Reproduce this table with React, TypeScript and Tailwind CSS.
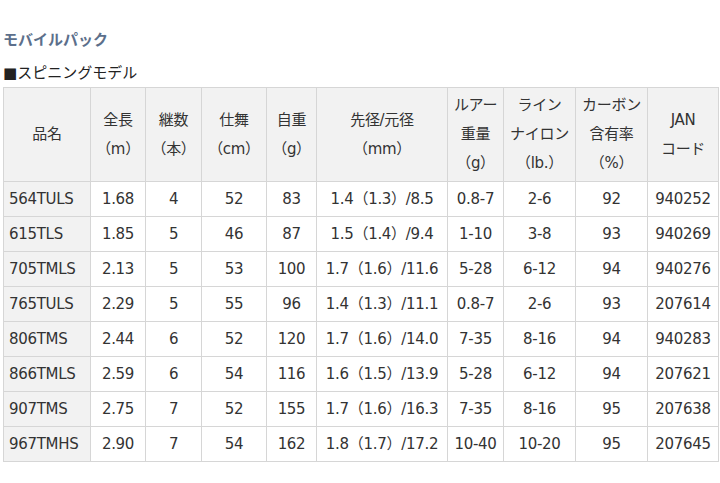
const widths = [87, 55, 56, 65, 50, 131, 56, 72, 72, 71];

const headers: string[][] = [
  ["品名"],
  ["全長", "（m）"],
  ["継数", "（本）"],
  ["仕舞", "（cm）"],
  ["自重", "（g）"],
  ["先径/元径", "（mm）"],
  ["ルアー", "重量", "（g）"],
  ["ライン", "ナイロン", "（lb.）"],
  ["カーボン", "含有率", "（%）"],
  ["JAN", "コード"],
];

const rows: string[][] = [
  ["564TULS", "1.68", "4", "52", "83", "1.4（1.3）/8.5", "0.8-7", "2-6", "92", "940252"],
  ["615TLS", "1.85", "5", "46", "87", "1.5（1.4）/9.4", "1-10", "3-8", "93", "940269"],
  ["705TMLS", "2.13", "5", "53", "100", "1.7（1.6）/11.6", "5-28", "6-12", "94", "940276"],
  ["765TULS", "2.29", "5", "55", "96", "1.4（1.3）/11.1", "0.8-7", "2-6", "93", "207614"],
  ["806TMS", "2.44", "6", "52", "120", "1.7（1.6）/14.0", "7-35", "8-16", "94", "940283"],
  ["866TMLS", "2.59", "6", "54", "116", "1.6（1.5）/13.9", "5-28", "6-12", "94", "207621"],
  ["907TMS", "2.75", "7", "52", "155", "1.7（1.6）/16.3", "7-35", "8-16", "95", "207638"],
  ["967TMHS", "2.90", "7", "54", "162", "1.8（1.7）/17.2", "10-40", "10-20", "95", "207645"],
];

export default function App() {
  return (
    <div
      className="w-[720px] h-[483px] bg-white text-[#333] overflow-hidden"
      style={{ fontFamily: '"DejaVu Sans", "Noto Sans CJK JP", sans-serif' }}
    >
      <div className="pt-[30px] pl-[3px] text-[15px] font-bold text-[#5c6f8b] leading-[20px]">
        モバイルパック
      </div>
      <div className="mt-[13px] pl-[3px] text-[15px] leading-[20px] text-[#222]">■スピニングモデル</div>

      <table className="ml-[3px] mt-[4px] border-collapse table-fixed w-[715px] text-[15px] tracking-[-0.3px]">
        <colgroup>
          {widths.map((w, i) => (
            <col key={i} style={{ width: w }} />
          ))}
        </colgroup>
        <thead>
          <tr className="h-[94px] bg-[#f2f2f2]">
            {headers.map((lines, i) => (
              <th key={i} className="border border-[#d6d6d6] font-normal text-center align-middle p-0 leading-[29px] text-[15px]">
                {lines.map((l, j) => (
                  <div key={j}>{l}</div>
                ))}
              </th>
            ))}
          </tr>
        </thead>
        <tbody>
          {rows.map((r, i) => (
            <tr key={i} className="h-[35px]">
              {r.map((c, j) => (
                <td
                  key={j}
                  className={
                    j === 0
                      ? "border border-[#d6d6d6] bg-[#f2f2f2] pl-[5px] text-left whitespace-nowrap"
                      : "border border-[#d6d6d6] text-center whitespace-nowrap p-0"
                  }
                >
                  {c}
                </td>
              ))}
            </tr>
          ))}
        </tbody>
      </table>
    </div>
  );
}
